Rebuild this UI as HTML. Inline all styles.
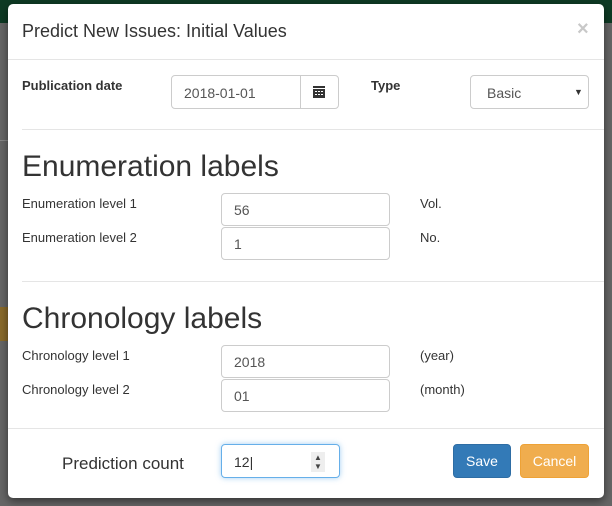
<!DOCTYPE html>
<html><head><style>
body{margin:0;width:612px;height:506px;background:#666;position:relative;overflow:hidden;font-family:"Liberation Sans",sans-serif;color:#333}
.top{position:absolute;left:0;top:0;width:612px;height:23px;background:#0e3a24}
.modal{position:absolute;left:8px;top:4px;width:596px;height:494px;background:#fff;border-radius:5px;box-shadow:0 3px 9px rgba(0,0,0,.5)}
.a{position:absolute}
.inp{position:absolute;border:1px solid #ccc;border-radius:4px;height:33px;box-sizing:border-box;font-size:14px;color:#555;padding:8px 12px;line-height:14px}
.hr{position:absolute;height:1px;background:#e5e5e5}
.lbl{position:absolute;font-size:13px}
h2{position:absolute;margin:0;font-weight:normal;font-size:30px;color:#333}
.btn{position:absolute;color:#fff;font-size:14px;border-radius:4px;text-align:center;line-height:32px;height:34px;box-sizing:border-box}
</style></head><body>
<div class="top"></div>
<div class="a" style="left:0;top:140px;width:8px;height:1px;background:#888"></div>
<div class="a" style="left:0;top:307px;width:8px;height:34px;background:#8a6a2a"></div>
<div class="modal">
<div class="a" style="left:14px;top:17px;font-size:18px">Predict New Issues: Initial Values</div>
<div class="a" style="left:569px;top:14px;font-size:20px;color:#c8c8c8;font-weight:bold">×</div>
<div class="hr" style="left:0;top:55px;width:596px"></div>
<div class="lbl" style="left:14px;top:74px;font-weight:bold">Publication date</div>
<div class="inp" style="left:163px;top:71px;width:168px;height:34px;padding-top:10px">2018-01-01</div>
<div class="a" style="left:292px;top:72px;width:1px;height:32px;background:#ccc"></div>
<svg class="a" style="left:305px;top:82px" width="12" height="12"><rect x="0" y="0" width="12" height="2" fill="#333"/><rect x="0" y="3" width="12" height="9" fill="#333"/><g fill="#fff"><rect x="2" y="5" width="2" height="1"/><rect x="5" y="5" width="2" height="1"/><rect x="8" y="5" width="2" height="1"/><rect x="2" y="8" width="2" height="1"/><rect x="5" y="8" width="2" height="1"/><rect x="8" y="8" width="2" height="1"/></g></svg>
<div class="lbl" style="left:363px;top:74px;font-weight:bold">Type</div>
<div class="inp" style="left:462px;top:71px;width:119px;height:34px;padding:10px 16px">Basic</div>
<div class="a" style="left:566px;top:83px;font-size:9px;color:#333">▼</div>
<div class="hr" style="left:14px;top:125px;width:582px"></div>
<h2 style="left:14px;top:146px">Enumeration labels</h2>
<div class="lbl" style="left:14px;top:192px">Enumeration level 1</div>
<div class="inp" style="left:213px;top:189px;width:169px;padding-top:9px">56</div>
<div class="lbl" style="left:412px;top:192px">Vol.</div>
<div class="lbl" style="left:14px;top:226px">Enumeration level 2</div>
<div class="inp" style="left:213px;top:223px;width:169px;padding-top:9px">1</div>
<div class="lbl" style="left:412px;top:226px">No.</div>
<div class="hr" style="left:14px;top:277px;width:582px"></div>
<h2 style="left:14px;top:298px">Chronology labels</h2>
<div class="lbl" style="left:14px;top:344px">Chronology level 1</div>
<div class="inp" style="left:213px;top:341px;width:169px;padding-top:9px">2018</div>
<div class="lbl" style="left:412px;top:344px">(year)</div>
<div class="lbl" style="left:14px;top:378px">Chronology level 2</div>
<div class="inp" style="left:213px;top:375px;width:169px;padding-top:9px">01</div>
<div class="lbl" style="left:412px;top:378px">(month)</div>
<div class="hr" style="left:0;top:424px;width:596px"></div>
<div class="a" style="left:54px;top:450px;font-size:17px;color:#333">Prediction count</div>
<div class="inp" style="left:213px;top:440px;width:119px;height:34px;border-color:#66afe9;box-shadow:0 0 6px rgba(102,175,233,.6);padding-top:10px;color:#333">12|</div>
<div class="a" style="left:303px;top:448px;width:14px;height:20px;background:#eee;font-size:8px;line-height:9px;text-align:center;color:#444;padding-top:1px;box-sizing:border-box">▲<br>▼</div>
<div class="btn" style="left:445px;top:440px;width:58px;background:#337ab7;border:1px solid #2e6da4">Save</div>
<div class="btn" style="left:512px;top:440px;width:69px;background:#f0ad4e;border:1px solid #eea236">Cancel</div>
</div>
</body></html>
